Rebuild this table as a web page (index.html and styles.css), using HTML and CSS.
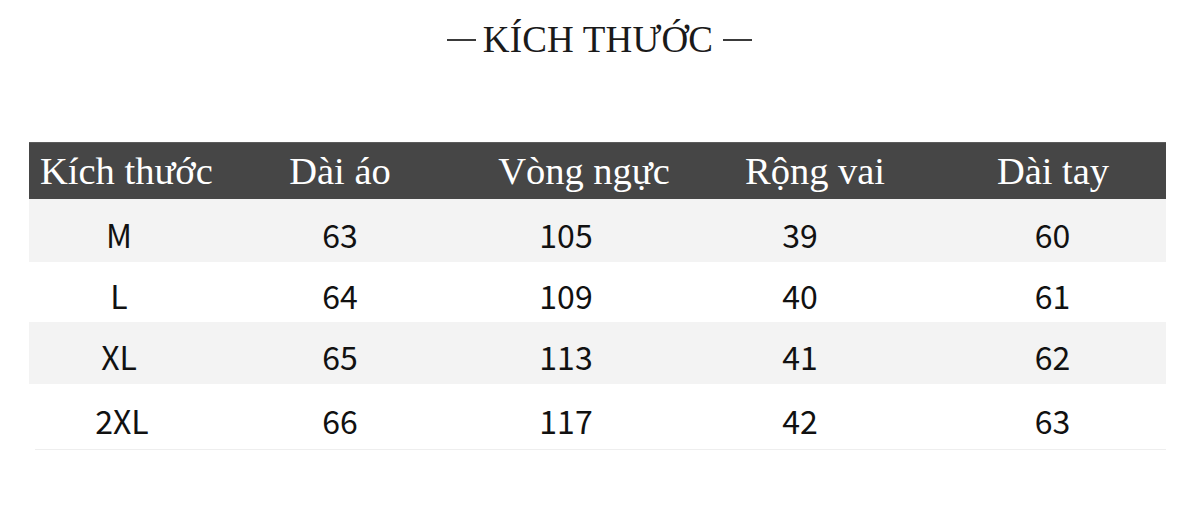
FILE: index.html
```html
<!DOCTYPE html>
<html lang="vi">
<head>
<meta charset="utf-8">
<title>Kích thước</title>
<link rel="stylesheet" href="styles.css">
</head>
<body>
<div class="page">
  <h1 class="title"><span class="dash dash-l"></span>KÍCH THƯỚC<span class="dash dash-r"></span></h1>
  <div class="table">
    <div class="row head">
      <div class="cell c1">Kích thước</div>
      <div class="cell c2">Dài áo</div>
      <div class="cell c3">Vòng ngực</div>
      <div class="cell c4">Rộng vai</div>
      <div class="cell c5">Dài tay</div>
    </div>
    <div class="row data shade r1">
      <div class="cell c1">M</div>
      <div class="cell c2">63</div>
      <div class="cell c3">105</div>
      <div class="cell c4">39</div>
      <div class="cell c5">60</div>
    </div>
    <div class="row data r2">
      <div class="cell c1">L</div>
      <div class="cell c2">64</div>
      <div class="cell c3">109</div>
      <div class="cell c4">40</div>
      <div class="cell c5">61</div>
    </div>
    <div class="row data shade r3">
      <div class="cell c1">XL</div>
      <div class="cell c2">65</div>
      <div class="cell c3">113</div>
      <div class="cell c4">41</div>
      <div class="cell c5">62</div>
    </div>
    <div class="row data r4">
      <div class="cell c1">2XL</div>
      <div class="cell c2">66</div>
      <div class="cell c3">117</div>
      <div class="cell c4">42</div>
      <div class="cell c5">63</div>
    </div>
  </div>
</div>
</body>
</html>
```
FILE: styles.css
```css
html, body {
  margin: 0;
  padding: 0;
  background: #ffffff;
}

.page {
  width: 1198px;
  height: 507px;
  overflow: hidden;
  padding-top: 18px;
  box-sizing: border-box;
}

.title {
  margin: 0;
  display: flex;
  justify-content: center;
  align-items: center;
  font-family: "Liberation Serif", "Times New Roman", serif;
  font-weight: normal;
  font-size: 37px;
  line-height: 44px;
  color: #1a1a1a;
  letter-spacing: 0.2px;
  padding-left: 1px;
}

.dash {
  display: inline-block;
  width: 29px;
  height: 2px;
  background: #3a3a3a;
  margin-top: -1px;
}

.dash-l {
  margin-right: 7px;
}

.dash-r {
  margin-left: 10px;
}

.table {
  margin: 80px 0 0 29px;
  width: 1137px;
}

.row {
  display: grid;
  height: 62px;
  align-items: center;
}

.cell {
  text-align: center;
  white-space: nowrap;
}

.head {
  grid-template-columns: 194px 234px 254px 208px 247px;
  height: 56px;
  background: #464646;
  border-top: 1px solid #5c5c5c;
  color: #ffffff;
  font-family: "Liberation Serif", "Times New Roman", serif;
  font-size: 38.5px;
}

.head .c1 {
  text-align: left;
  padding-left: 11px;
}

.head .c5 {
  padding-left: 21px;
}

.data {
  grid-template-columns: 180px 262px 190px 278px 227px;
  font-family: "Noto Sans CJK SC", "Noto Sans", sans-serif;
  font-size: 32px;
  color: #111111;
}

.data .cell {
  padding-top: 6px;
}

.shade {
  background: #f3f3f3;
}

.r1 { height: 63px; }
.r2 { height: 60px; }
.r3 { height: 62px; }
.r4 {
  height: 65px;
  border-bottom: 1px solid #eeeeee;
  margin-left: 6px;
  padding-right: 6px;
  grid-template-columns: 174px 262px 190px 278px 227px;
}
```
